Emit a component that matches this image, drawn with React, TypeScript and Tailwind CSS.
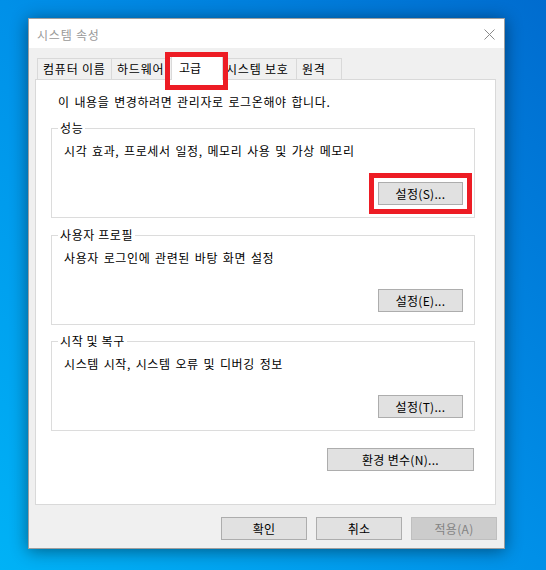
const FONT = "[font-family:'Noto_Sans_CJK_KR','Malgun_Gothic',sans-serif]";

const Button = ({
  label,
  width,
  disabled = false,
  marked = false,
}: {
  label: string;
  width: string;
  disabled?: boolean;
  marked?: boolean;
}) => (
  <div
    className={`${width} h-[23px] flex items-center justify-center border text-[12px] leading-none tracking-[0.3px] ${
      disabled
        ? "bg-[#cccccc] border-[#bfbfbf] text-[#838383]"
        : "bg-[#e1e1e1] border-[#adadad] text-black"
    } ${marked ? "outline-[5px] outline-solid outline-[#ed1c24] outline-offset-[4px]" : ""}`}
  >
    {label}
  </div>
);

const Group = ({
  title,
  text,
  button,
  marked = false,
}: {
  title: string;
  text: string;
  button: string;
  marked?: boolean;
}) => (
  <fieldset className="border border-[#dcdcdc] pb-[12px] flex flex-col">
    <legend className="ml-[6px] px-[2px] leading-[16px] text-[12px] tracking-[0.6px]">{title}</legend>
    <div className="ml-[12px] mt-[7px] leading-[16px] text-[12px] tracking-[0.6px] [word-spacing:1.5px]">
      {text}
    </div>
    <div className="mr-[11px] mt-[23px] flex justify-end">
      <Button label={button} width="w-[85px]" marked={marked} />
    </div>
  </fieldset>
);

const tabs = [
  { label: "컴퓨터 이름", w: "w-[75px]" },
  { label: "하드웨어", w: "w-[61px]" },
  { label: "고급", w: "w-[52px]", active: true },
  { label: "시스템 보호", w: "w-[76px]" },
  { label: "원격", w: "w-[45px]" },
];

const App = () => {
  return (
    <div
      className={`w-[546px] h-[570px] overflow-hidden bg-linear-to-tr from-[#00b2f6] via-[#0090e8] to-[#006ccf] pt-[18px] pl-[28px] ${FONT} text-black`}
    >
      <div className="w-[477px] h-[531px] border border-[#9e9e9e] bg-[#f0f0f0] flex flex-col shadow-[0_2px_16px_rgba(0,0,0,0.45)]">
        {/* title bar */}
        <div className="h-[29px] bg-white flex items-center justify-between pl-[8px] pr-[9px]">
          <span className="text-[12px] text-[#999999] leading-none tracking-[0.8px] mt-[2px]">시스템 속성</span>
          <svg width="11" height="11" viewBox="0 0 11 11" className="mt-[1px]">
            <path d="M0.5 0.5 L10.5 10.5 M10.5 0.5 L0.5 10.5" stroke="#8a8a8a" strokeWidth="1" />
          </svg>
        </div>

        <div className="flex-1 flex flex-col pt-[10px] pl-[6px] pr-[8px] pb-[7px]">
          {/* tabs */}
          <div className="flex h-[21px] pl-[2px] items-end">
            {tabs.map((t) =>
              t.active ? (
                <div
                  key={t.label}
                  className={`${t.w} shrink-0 relative z-10 -mx-[2px] h-[24px] -mb-[1px] bg-white border border-b-0 border-[#d9d9d9] text-[12px] leading-[21px] pl-[7px]`}
                >
                  고급
                  <div className="absolute -left-[7px] -right-[6px] -top-[5px] -bottom-[10px] border-[5px] border-[#ed1c24]" />
                </div>
              ) : (
                <div
                  key={t.label}
                  className={`${t.w} shrink-0 h-[21px] border border-b-0 border-l-0 first:border-l border-[#d9d9d9] text-[12px] leading-[20px] pl-[5px] tracking-[0.8px] whitespace-nowrap overflow-hidden`}
                >
                  {t.label}
                </div>
              ),
            )}
          </div>

          {/* panel */}
          <div className="h-[426px] bg-white border border-[#d9d9d9] pt-[14px] flex flex-col">
            <div className="ml-[22px] text-[12px] leading-[16px] tracking-[0.6px] [word-spacing:1.5px]">
              이 내용을 변경하려면 관리자로 로그온해야 합니다.
            </div>
            <div className="mt-[10px] ml-[15px] mr-[20px]">
              <Group
                title="성능"
                text="시각 효과, 프로세서 일정, 메모리 사용 및 가상 메모리"
                button="설정(S)..."
                marked
              />
            </div>
            <div className="mt-[9px] ml-[15px] mr-[20px]">
              <Group
                title="사용자 프로필"
                text="사용자 로그인에 관련된 바탕 화면 설정"
                button="설정(E)..."
              />
            </div>
            <div className="mt-[8px] ml-[15px] mr-[20px]">
              <Group
                title="시작 및 복구"
                text="시스템 시작, 시스템 오류 및 디버깅 정보"
                button="설정(T)..."
              />
            </div>
            <div className="mt-[17px] mr-[21px] flex justify-end">
              <Button label="환경 변수(N)..." width="w-[147px]" />
            </div>
          </div>

          {/* dialog buttons */}
          <div className="mt-[12px] -mr-[1px] flex justify-end gap-[9px]">
            <Button label="확인" width="w-[86px]" />
            <Button label="취소" width="w-[86px]" />
            <Button label="적용(A)" width="w-[86px]" disabled />
          </div>
        </div>
      </div>
    </div>
  );
};

export default App;
